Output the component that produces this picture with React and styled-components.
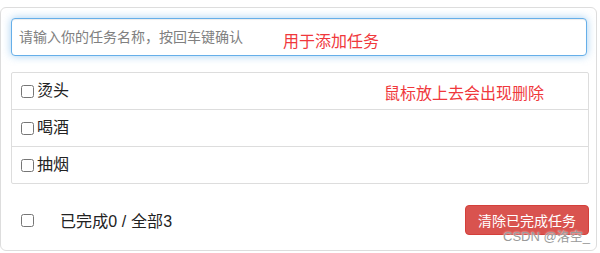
import React from "react";
import styled, { createGlobalStyle } from "styled-components";

const FONT = `"Liberation Sans", "Noto Sans CJK SC", sans-serif`;

const GlobalStyle = createGlobalStyle`
  body {
    margin: 0;
    background: #fff;
    font-family: ${FONT};
  }
`;

const tasks = [
  { id: 1, name: "烫头", done: false },
  { id: 2, name: "喝酒", done: false },
  { id: 3, name: "抽烟", done: false },
];

const App = () => {
  const doneCount = tasks.filter((t) => t.done).length;
  return (
    <>
      <GlobalStyle />
      <Wrapper>
        <TaskInput placeholder="请输入你的任务名称，按回车键确认" />
        <TaskList>
          {tasks.map((task) => (
            <Item key={task.id}>
              <CheckBox type="checkbox" defaultChecked={task.done} />
              <ItemName>{task.name}</ItemName>
            </Item>
          ))}
        </TaskList>
        <Footer>
          <FooterLabel>
            <FooterCheck type="checkbox" />
            <Summary>
              已完成{doneCount} / 全部{tasks.length}
            </Summary>
          </FooterLabel>
          <DangerButton>清除已完成任务</DangerButton>
        </Footer>

        {/* annotations painted over the screenshot */}
        <Note $left={282} $top={26}>用于添加任务</Note>
        <Note $left={383} $top={78}>鼠标放上去会出现删除</Note>
        <Watermark>CSDN @洛空_</Watermark>
      </Wrapper>
    </>
  );
};

const Wrapper = styled.div`
  position: relative;
  box-sizing: border-box;
  width: 597px;
  margin-top: 7px;
  padding: 10px 7px 15px 10px;
  border: 1px solid #ddd;
  border-radius: 6px;
`;

const TaskInput = styled.input`
  display: block;
  box-sizing: border-box;
  width: 576px;
  height: 38px;
  padding: 0 7px;
  border: 1px solid #66afe9;
  border-radius: 4px;
  outline: none;
  font-family: ${FONT};
  font-size: 14px;
  color: #555;
  box-shadow: inset 0 1px 1px rgba(0, 0, 0, 0.075),
    0 0 8px rgba(102, 175, 233, 0.6);

  &::placeholder {
    color: #808080;
  }
`;

const TaskList = styled.ul`
  margin: 16px 0 0;
  padding: 0;
  border: 1px solid #ddd;
  border-radius: 2px;
`;

const Item = styled.li`
  list-style: none;
  display: flex;
  align-items: center;
  height: 36px;
  padding-left: 5px;
  font-size: 16px;
  color: #222;

  & + & {
    border-top: 1px solid #ddd;
  }
`;

const CheckBox = styled.input`
  width: 13px;
  height: 13px;
  margin: 0 3px 0 4px;
`;

const ItemName = styled.span`
  line-height: 1;
`;

const Footer = styled.div`
  display: flex;
  align-items: center;
  justify-content: space-between;
  height: 30px;
  margin-top: 21px;
`;

const FooterLabel = styled.label`
  display: flex;
  align-items: center;
  padding-left: 10px;
  font-size: 16px;
  color: #222;
`;

const FooterCheck = styled.input`
  width: 13px;
  height: 13px;
  margin: 1px 0 0;
`;

const Summary = styled.span`
  margin-left: 26px;
  letter-spacing: 0.1px;
`;

const DangerButton = styled.button`
  box-sizing: border-box;
  height: 30px;
  padding: 0 12px;
  border: 1px solid #d43f3a;
  border-radius: 4px;
  background: #d9534f;
  color: #fff;
  font-family: ${FONT};
  font-size: 14px;
  cursor: pointer;
`;

const Note = styled.span`
  position: absolute;
  left: ${(p) => p.$left}px;
  top: ${(p) => p.$top}px;
  font-size: 16px;
  line-height: 16px;
  color: #f0383c;
`;

const Watermark = styled.span`
  position: absolute;
  left: 502px;
  top: 222px;
  font-size: 13px;
  line-height: 14px;
  color: #9a9a9a;
  text-shadow: 0 0 2px #fff;
`;

export default App;
